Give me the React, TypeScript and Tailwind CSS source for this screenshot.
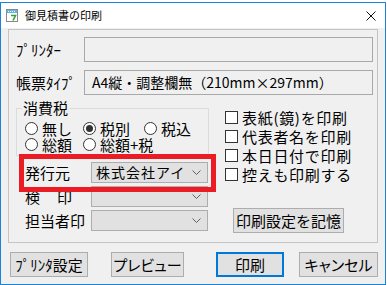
const jp = "font-['Noto_Sans_CJK_JP','Noto_Sans',sans-serif]"

function TitleIcon() {
  return (
    <svg width="12" height="13" viewBox="0 0 12 13" className="shrink-0">
      <rect x="0.5" y="0.5" width="11" height="12" fill="#ffffff" stroke="#8a8a8a" />
      <rect x="1" y="1" width="10" height="3" fill="#5fb7e8" />
      <path d="M2 2.5h1M4 2.5h1M6 2.5h1M8 2.5h1" stroke="#ffffff" strokeWidth="1" />
      <path d="M5 6.5h4.5L7 11.5" stroke="#3aa03a" strokeWidth="1.6" fill="none" />
    </svg>
  )
}

function Radio({ checked, label }: { checked?: boolean; label: string }) {
  return (
    <div className="flex items-center h-[15px]">
      <span className="w-[13px] h-[13px] rounded-full border border-[#333333] bg-white flex items-center justify-center shrink-0">
        {checked && <span className="w-[7px] h-[7px] rounded-full bg-[#333333]" />}
      </span>
      <span className="ml-[4px] text-[15px] leading-[15px] whitespace-nowrap">{label}</span>
    </div>
  )
}

function Check({ label }: { label: string }) {
  return (
    <div className="flex items-center h-[19px]">
      <span className="w-[13px] h-[13px] border border-[#333333] bg-white shrink-0" />
      <span className="ml-[4px] text-[15px] leading-[15px] tracking-[0.7px] whitespace-nowrap">{label}</span>
    </div>
  )
}

function Select({ value }: { value?: string }) {
  return (
    <div className="w-[117px] h-[21px] border border-[#adadad] bg-[#e1e1e1] flex items-center pl-[4px] pr-[6px]">
      <span className="flex-1 text-[14px] leading-[15px] tracking-[1px] whitespace-nowrap">{value}</span>
      <svg width="9" height="5" viewBox="0 0 9 5" className="shrink-0">
        <path d="M0.5 0.5L4.5 4.5L8.5 0.5" stroke="#606060" fill="none" />
      </svg>
    </div>
  )
}

function Button({ label, className, palt }: { label: string; className: string; palt?: boolean }) {
  return (
    <div
      className={`h-[25px] border border-[#adadad] bg-[#e1e1e1] flex items-center justify-center text-[15px] leading-[15px] whitespace-nowrap ${palt ? "[font-feature-settings:'palt']" : ''} ${className}`}
    >
      {label}
    </div>
  )
}

export default function App() {
  return (
    <div className={`w-[387px] h-[285px] bg-white pt-[2px] overflow-hidden text-black ${jp}`}>
      <div className="w-[386px] h-[283px] border border-[#1883d7] bg-[#f0f0f0] flex flex-col">
        {/* Title bar */}
        <div className="h-[25px] bg-white flex items-center pl-[5px] pr-[9px] shrink-0">
          <TitleIcon />
          <span className="ml-[7px] text-[11px] leading-none">御見積書の印刷</span>
          <svg width="10" height="10" viewBox="0 0 10 10" className="ml-auto">
            <path d="M0.5 0.5L9.5 9.5M9.5 0.5L0.5 9.5" stroke="#111111" strokeWidth="1" />
          </svg>
        </div>

        {/* Main panel */}
        <div className="ml-[7px] mt-[1px] w-[370px] h-[214px] border border-[#c4c4c4] pl-[7px] pr-[3px] shrink-0">
          <div className="mt-[7px] h-[25px] flex items-center">
            <span className="w-[68px] text-[15px] leading-[15px]">ﾌﾟﾘﾝﾀｰ</span>
            <div className="w-[289px] h-[25px] border border-[#a8a8a8] bg-[#f0f0f0]" />
          </div>
          <div className="mt-[8px] h-[25px] flex items-center">
            <span className="w-[68px] text-[15px] leading-[15px]">帳票ﾀｲﾌﾟ</span>
            <div className="w-[289px] h-[25px] border border-[#a8a8a8] bg-[#f0f0f0] flex items-center pl-[7px]">
              <span className="text-[14px] leading-[15px] whitespace-nowrap">A4縦・調整欄無（210mm×297mm）</span>
            </div>
          </div>

          <div className="flex">
            {/* Left column */}
            <div className="w-[209px]">
              <fieldset className="mt-[5px] w-[193px] border border-[#dcdcdc] pl-[5px] pb-[3px]">
                <legend className="px-[1px] text-[15px] leading-[16px]">消費税</legend>
                <div className="pl-[3px] pt-[5px] flex flex-col gap-[1px]">
                  <div className="flex">
                    <div className="w-[58px]"><Radio label="無し" /></div>
                    <div className="w-[61px]"><Radio label="税別" checked /></div>
                    <Radio label="税込" />
                  </div>
                  <div className="flex">
                    <div className="w-[58px]"><Radio label="総額" /></div>
                    <Radio label="総額+税" />
                  </div>
                </div>
              </fieldset>

              <div className="mt-[6px] flex flex-col gap-[3px] pl-[9px]">
                <div className="relative flex items-center">
                  <span className="w-[66px] text-[15px] leading-[15px]">発行元</span>
                  <Select value="株式会社アイ" />
                  <div className="absolute left-[-6px] top-[-8px] w-[197px] h-[38px] border-[5px] border-[#ec1c24]" />
                </div>
                <div className="flex items-center">
                  <span className="w-[66px] text-[15px] leading-[15px] flex">
                    <span className="w-[47px] flex justify-between">
                      <span>検</span>
                      <span>印</span>
                    </span>
                  </span>
                  <Select />
                </div>
                <div className="flex items-center">
                  <span className="w-[66px] text-[15px] leading-[15px]">担当者印</span>
                  <Select />
                </div>
              </div>
            </div>

            {/* Right column */}
            <div className="mt-[13px] flex flex-col">
              <Check label="表紙(鏡)を印刷" />
              <Check label="代表者名を印刷" />
              <Check label="本日日付で印刷" />
              <Check label="控えも印刷する" />
              <Button label="印刷設定を記憶" className="mt-[24px] ml-[8px] w-[111px] h-[24px] text-[14px]" />
            </div>
          </div>
        </div>

        {/* Bottom buttons */}
        <div className="mt-[9px] ml-[9px] flex">
          <Button label="ﾌﾟﾘﾝﾀ設定" className="w-[78px]" />
          <Button label="プレビュー" className="ml-[23px] w-[73px]" palt />
          <div className="ml-[32px] w-[68px] h-[25px] border-2 border-[#0078d7] bg-[#e1e1e1] flex items-center justify-center text-[15px] leading-[15px]">
            印刷
          </div>
          <Button label="キャンセル" className="ml-[15px] w-[79px]" palt />
        </div>
      </div>
    </div>
  )
}
